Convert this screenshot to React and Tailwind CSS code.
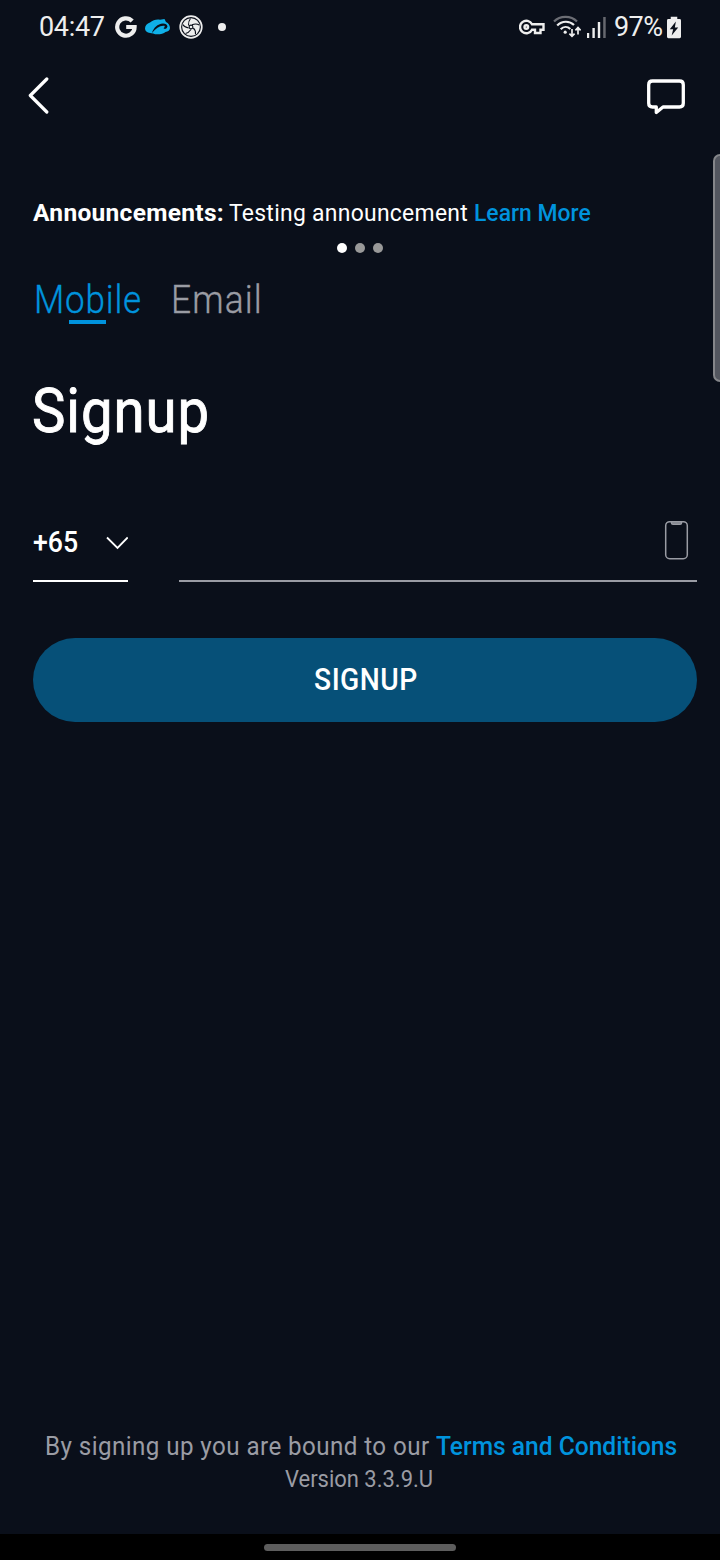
import React from "react";

function StatusBar() {
  return (
    <header className="flex h-[54px] items-center pl-[39px] pr-[39px] text-[#eeeeee]">
      <span className="w-[76px] whitespace-nowrap pt-px text-[27px] leading-[53px] tracking-[-0.3px]">04:47</span>
      <svg className="h-[22px] w-[22px]" viewBox="0 0 22 22" fill="none" stroke="#eeeeee" strokeWidth="4.200">
        <path d="M17.2 5A8.7 8.7 0 1 0 19.6 11H11.2" />
      </svg>
      <svg className="ml-[8px] h-[16px] w-[26px]" viewBox="0 0 26 16">
        <path fill="#0fb0e8" d="M5 14C2 13.500 0 12 0 9.500 0 6.500 2 4.500 5 3.500 8 1 12 0 15 0.800L19.500 0 21 3C23.500 4 25 6.500 25 9 25 11.500 23 12.500 20.500 13 18 15.500 11 16 8 14.500Z" />
        <path fill="#0a0f1a" d="M7 14C8.500 9 12.500 5 18 4.600Q22 4.600 22.500 7.500Q22 9.500 20 10L18.500 9.200Q20.500 8 19.500 6.800C15 6.200 11 9 7 14Z" />
      </svg>
      <svg className="ml-[8px] h-[24px] w-[24px]" viewBox="0 0 24 24">
        <circle cx="12" cy="12" r="10.800" fill="none" stroke="#eeeeee" strokeWidth="1.700" />
        <circle cx="12" cy="12" r="8.800" fill="#eeeeee" />
        <g stroke="#0a0f1a" strokeWidth="1.100" fill="none">
          <path d="M9.500 10.500Q9.300 6 11.500 3.500M13 9.800Q17 8 20.300 10M14.200 13Q16.800 15 16.500 19M12 14.500Q9.500 18 6.500 18.500M9.700 13Q5.500 12.500 3.800 9.500" />
        </g>
        <circle cx="12" cy="12" r="2.400" fill="#0a0f1a" />
        <circle cx="12" cy="12" r="1.300" fill="#eeeeee" />
      </svg>
      <span className="ml-[15px] h-[8px] w-[8px] rounded-full bg-[#eeeeee]" />
      <div className="flex-1" />
      <svg className="h-[16px] w-[26px]" viewBox="0 0 26 16" fill="none" stroke="#eeeeee" strokeWidth="2.400">
        <path d="M13 5.300A6.300 6.300 0 1 0 13 10.700H16V14H21.500V10.700H24.500V5.300Z" />
        <circle cx="7.300" cy="8" r="1.800" />
      </svg>
      <svg className="ml-[8px] h-[24px] w-[28px]" viewBox="0 0 28 24" fill="none" stroke="#eeeeee" strokeWidth="2.200">
        <path d="M1 6.500C7 .2 18 .2 24 6.500" stroke="#6b6d74" />
        <path d="M4.200 10.500C9 5.600 16.500 5.600 21 10M7.700 14.200C10.500 11.300 14.500 11.300 17.300 14" />
        <circle cx="12.200" cy="17.200" r="1.600" fill="#eeeeee" stroke="none" />
        <path strokeWidth="1.700" d="M19 14V21M16.400 18.600L19 21.300 21.600 18.600M25 19.500V12.800M22.400 15.300L25 12.600 27.600 15.300" />
      </svg>
      <svg className="ml-[6px] h-[22px] w-[19px]" viewBox="0 0 19 22">
        <path fill="#eeeeee" d="M0 17H2.200V22H0ZM5.400 12H7.800V22H5.400ZM10.800 6H13.200V22H10.800Z" />
        <path fill="#66686f" d="M16.200 1H18.700V22H16.200Z" />
      </svg>
      <span className="ml-[8px] w-[53px] whitespace-nowrap pt-px text-[27px] leading-[53px] tracking-[-0.6px]">97%</span>
      <svg className="h-[23px] w-[14px]" viewBox="0 0 15 23">
        <path fill="#eeeeee" d="M4 0H11V2.500H13.500Q15 2.500 15 4V21.500Q15 23 13.500 23H1.500Q0 23 0 21.500V4Q0 2.500 1.500 2.500H4Z" />
        <path fill="#0a0f1a" d="M9.500 5L3 13.500H6.600L5 20 12 11.500H8.400Z" />
      </svg>
    </header>
  );
}

function TopBar() {
  return (
    <div className="flex h-[84px] items-center justify-between pl-[28px] pr-[34px]">
      <svg className="h-[38px] w-[21px]" viewBox="0 0 21 38" fill="none" stroke="#ffffff" strokeWidth="3.200" strokeLinecap="round" strokeLinejoin="round">
        <path d="M18.800 2L2.300 18.500L18.800 35" />
      </svg>
      <svg className="h-[38px] w-[40px]" viewBox="0 0 40 38" fill="none" stroke="#ffffff" strokeWidth="3.300" strokeLinejoin="round">
        <path d="M6.500 4H33.500Q37.300 4 37.300 7.800V26.200Q37.300 30 33.500 30H17L10.300 35.500V30H6.500Q2.700 30 2.700 26.200V7.800Q2.700 4 6.500 4Z" />
      </svg>
    </div>
  );
}

function Announcement() {
  return (
    <section>
      <p className="flex h-[34px] items-center whitespace-nowrap text-[24.5px] leading-[34px] text-white">
        <strong className="w-[195.5px] font-bold tracking-[0.3px]">Announcements:</strong>
        <span className="w-[245.5px]">
          <span className="inline-block origin-left scale-x-[0.935] tracking-[0.3px]">Testing announcement</span>
        </span>
        <a className="inline-block origin-left scale-x-[0.935] font-medium text-[#0093dd]">Learn More</a>
      </p>
      <div className="mt-[13px] flex justify-center gap-[8px] pr-[10px]">
        <i className="h-[10px] w-[10px] rounded-full bg-white" />
        <i className="h-[10px] w-[10px] rounded-full bg-[#999999]" />
        <i className="h-[10px] w-[10px] rounded-full bg-[#999999]" />
      </div>
    </section>
  );
}

function Tabs() {
  return (
    <nav className="mt-[24px] flex whitespace-nowrap text-[38px] font-light leading-[46px]">
      <div className="h-[47px] w-[137.5px] text-[#0093dd]">
        <div className="h-[43px]">
          <span className="ml-px inline-block origin-left scale-x-[0.92] tracking-[0.9px] [-webkit-text-stroke:0.35px_#0093dd]">Mobile</span>
        </div>
        <div className="ml-[36px] h-[4px] w-[37px] bg-[#0093dd]" />
      </div>
      <span className="inline-block origin-left scale-x-[0.93] tracking-[1.2px] text-[#9a9ca4] [-webkit-text-stroke:0.35px_#9a9ca4]">Email</span>
    </nav>
  );
}

export default function App() {
  return (
    <div className="flex h-[1560px] w-[720px] flex-col overflow-hidden bg-[#0a0f1a] font-['Roboto',sans-serif]">
      <StatusBar />
      <TopBar />
      <div className="relative flex flex-1 flex-col pl-[33px] pr-[23px] pt-[58px]">
        <div className="absolute right-[-8px] top-[16px] h-[228px] w-[15px] rounded-[7px] border-2 border-[#85868a] bg-[#53565f]" />
        <Announcement />
        <Tabs />
        <h1 className="mt-[50px] h-[76px] whitespace-nowrap text-[60.5px] leading-[75px] text-white">
          <span className="-ml-px inline-block origin-left scale-x-[0.93] tracking-[1px] [-webkit-text-stroke:0.9px_white]">Signup</span>
        </h1>
        <div className="mt-[54px] flex h-[78px] justify-between">
          <div className="flex w-[95px] items-center justify-between border-b-2 border-white pb-px text-[30px] font-medium text-white">
            <span className="inline-block w-[51px] origin-left scale-x-[0.89]">+65</span>
            <svg className="mt-[3px] h-[14px] w-[22px]" viewBox="0 0 22 14" fill="none" stroke="#ffffff" strokeWidth="1.800">
              <path d="M1 1.500L11.500 12L21.700 1.500" />
            </svg>
          </div>
          <div className="flex w-[518px] items-center justify-end border-b-2 border-[#9a9ca4] pb-[4px] pr-[8px]">
            <svg className="h-[40px] w-[25px]" viewBox="0 0 25 40" fill="none" stroke="#9a9ca4" strokeWidth="1.500">
              <rect x="1.700" y="1.700" width="21.600" height="37" rx="4" />
              <path d="M7.500 1.700V3Q7.500 4.300 9 4.300H16Q17.500 4.300 17.500 3V1.700Z" fill="#777a83" />
            </svg>
          </div>
        </div>
        <button className="mt-[56px] h-[84px] rounded-full bg-[#065078] pl-[2px] text-[31px] font-medium text-white">
          <span className="inline-block scale-x-[0.91] tracking-[0.5px]">SIGNUP</span>
        </button>
        <footer className="mb-[39px] mt-auto whitespace-nowrap text-[#9a9ca4]">
          <p className="flex h-[33px] pl-[12px] text-[26px] leading-[33px]">
            <span className="w-[391px]">
              <span className="inline-block origin-left scale-x-[0.93] tracking-[0.45px]">By signing up you are bound to our</span>
            </span>
            <a className="inline-block origin-left scale-x-[0.945] font-medium text-[#0093dd]">Terms and Conditions</a>
          </p>
          <p className="h-[32px] pl-[252px] text-[24px] leading-[32px]">
            <span className="inline-block origin-left scale-x-[0.915]">Version 3.3.9.U</span>
          </p>
        </footer>
      </div>
      <div className="flex h-[26px] justify-center bg-black pt-[10px]">
        <div className="h-[7px] w-[192px] rounded-full bg-[#5d5d5d]" />
      </div>
    </div>
  );
}
